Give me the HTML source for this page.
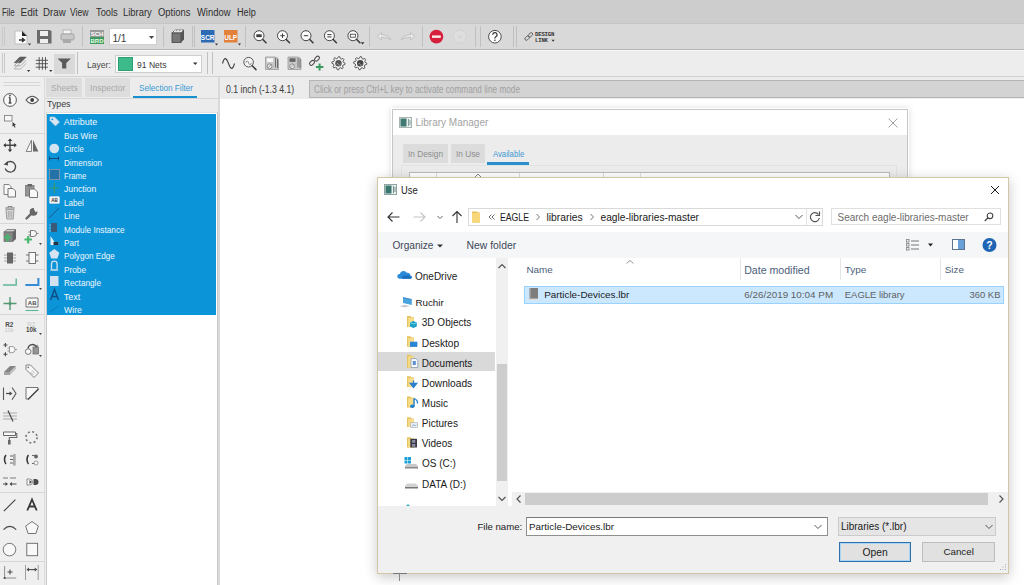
<!DOCTYPE html>
<html><head><meta charset="utf-8">
<style>
*{box-sizing:border-box;margin:0;padding:0}
html,body{width:1024px;height:585px;overflow:hidden;background:#fff;font-family:"Liberation Sans",sans-serif;color:#222}
.a{position:absolute}
.t{position:absolute;white-space:nowrap;line-height:1}
svg{position:absolute;overflow:visible}
</style></head><body>
<!-- MENU BAR -->
<div class="a" id="menubar" style="left:0;top:0;width:1024px;height:23px;background:#cdcdcd"></div>
<div class="t" style="left:1.9px;top:7.6px;font-size:10px;color:#2e2e2e;transform:scaleX(0.79);transform-origin:0 0">File</div>
<div class="t" style="left:20.5px;top:7.6px;font-size:10px;color:#2e2e2e;transform:scaleX(1.0);transform-origin:0 0">Edit</div>
<div class="t" style="left:42.7px;top:7.6px;font-size:10px;color:#2e2e2e;transform:scaleX(0.97);transform-origin:0 0">Draw</div>
<div class="t" style="left:70.4px;top:7.6px;font-size:10px;color:#2e2e2e;transform:scaleX(0.86);transform-origin:0 0">View</div>
<div class="t" style="left:95.5px;top:7.6px;font-size:10px;color:#2e2e2e;transform:scaleX(0.93);transform-origin:0 0">Tools</div>
<div class="t" style="left:123.4px;top:7.6px;font-size:10px;color:#2e2e2e;transform:scaleX(0.94);transform-origin:0 0">Library</div>
<div class="t" style="left:158px;top:7.6px;font-size:10px;color:#2e2e2e;transform:scaleX(0.94);transform-origin:0 0">Options</div>
<div class="t" style="left:196.6px;top:7.6px;font-size:10px;color:#2e2e2e;transform:scaleX(0.94);transform-origin:0 0">Window</div>
<div class="t" style="left:236.9px;top:7.6px;font-size:10px;color:#2e2e2e;transform:scaleX(0.91);transform-origin:0 0">Help</div>
<!-- TOOLBAR 1 -->
<div class="a" style="left:0;top:23px;width:1024px;height:27px;background:#d9d9d9;border-top:1px solid #c6c6c6;border-bottom:1px solid #b5b5b5"></div>
<!-- TOOLBAR 2 -->
<div class="a" style="left:0;top:50px;width:1024px;height:27px;background:#ededed;border-top:1px solid #f8f8f8;border-bottom:1px solid #d2d2d2"></div>
<div class="a" style="left:54px;top:54px;width:21px;height:20px;background:#d9d9d9"></div>
<div class="a" style="left:109px;top:28px;width:48px;height:17px;background:#fff;border:1px solid #cfcfcf"></div>
<div class="t" style="left:112.4px;top:33.6px;font-size:10px;color:#3a3a3a">1/1</div>
<div class="a" style="left:115px;top:55px;width:87px;height:18px;background:#fff;border:1px solid #cdcdcd"></div>
<div class="a" style="left:118px;top:57px;width:15px;height:14px;background:#3dba89;border:1px solid #2f9e70"></div>
<div class="t" style="left:136.7px;top:60px;font-size:9.5px;color:#3a3a3a;transform:scaleX(0.9);transform-origin:0 0">91 Nets</div>
<div class="t" style="left:86.5px;top:60px;font-size:9.5px;color:#4a4a4a;transform:scaleX(0.9);transform-origin:0 0">Layer:</div>
<svg width="1024" height="77" style="left:0;top:0" viewBox="0 0 1024 77">
 <g fill="none" stroke="#c0c0c0" stroke-width="1">
  <!-- handles -->
  <path d="M2.5 27v19M4.5 27v19M2.5 53v20M4.5 53v20" stroke="#c9c9c9"/>
  <!-- tb1 separators -->
  <path d="M82.5 26v21M163.5 26v21M192.5 26v21M194.5 26v21M245.5 26v21M369.5 26v21M422.5 26v21M475.5 26v21M480.5 26v21M513.5 26v21M516.5 26v21"/>
  <!-- tb2 separators -->
  <path d="M77.5 52v22M207.5 52v22M212.5 52v22"/>
 </g>
 <!-- new doc -->
 <path d="M15 31h8l4 4v9h-12z" fill="#fafafa" stroke="#b5b5b5" stroke-width="0.8"/>
 <path d="M22 31l5 5h-5z" fill="#222"/>
 <path d="M19 40h5M22 38l2.5 2-2.5 2" stroke="#333" stroke-width="1.4" fill="none"/>
 <path d="M28 43.5h3l-1.5 2z" fill="#333"/>
 <!-- save -->
 <path d="M37 30h13l1.5 1.5v12h-14.5z" fill="#6a6a6a"/>
 <rect x="40" y="31" width="8" height="5" fill="#eee"/>
 <rect x="40" y="39" width="8" height="4" fill="#eee"/>
 <!-- print -->
 <rect x="63" y="30" width="8" height="4" fill="#f4f4f4" stroke="#aaa" stroke-width="0.8"/>
 <rect x="61" y="34" width="13" height="6" rx="1" fill="#c8c8c8" stroke="#999" stroke-width="0.8"/>
 <rect x="63" y="39" width="8" height="4" fill="#aaa"/>
 <!-- SCH/BRD -->
 <rect x="90" y="30" width="14" height="7" fill="#9a9a9a"/>
 <rect x="90" y="37" width="14" height="7" fill="#3c9a5c"/>
 <text x="97" y="36" font-size="6" fill="#fff" text-anchor="middle" font-family="Liberation Sans" font-weight="bold">SCH</text>
 <text x="97" y="43" font-size="6" fill="#e8ffe8" text-anchor="middle" font-family="Liberation Sans" font-weight="bold">BRD</text>
 <!-- combo arrow -->
 <path d="M149 36h5l-2.5 3z" fill="#444"/>
 <!-- 3D box -->
 <path d="M172 33l3-3h9l-3 3z" fill="#ddd" stroke="#555" stroke-width="0.8"/>
 <rect x="172" y="33" width="9" height="9.5" fill="#777" stroke="#444" stroke-width="0.8"/>
 <path d="M181 33l3-3v9.5l-3 3z" fill="#555"/>
 <path d="M174 31.5l2 -1.5M177 31.5l2-1.5M180 31.5l2-1.5" stroke="#fff" stroke-width="0.8"/>
 <!-- SCR / ULP -->
 <rect x="201" y="30" width="13.5" height="12.5" fill="#2d6ab4"/>
 <text x="207.7" y="39.5" font-size="6.5" fill="#fff" text-anchor="middle" font-family="Liberation Sans" font-weight="bold">SCR</text>
 <path d="M215 43.5h3l-1.5 2z" fill="#333"/>
 <rect x="224" y="30" width="13.5" height="12.5" fill="#e2813c"/>
 <text x="230.7" y="39.5" font-size="6.5" fill="#fff" text-anchor="middle" font-family="Liberation Sans" font-weight="bold">ULP</text>
 <path d="M238 43.5h3l-1.5 2z" fill="#333"/>
 <!-- zooms -->
 <g fill="#fbfbfb" stroke="#3c3c3c" stroke-width="0.95">
  <circle cx="259" cy="35.7" r="5"/><circle cx="282.5" cy="35.7" r="5"/><circle cx="306" cy="35.7" r="5"/><circle cx="329.4" cy="35.7" r="5"/><circle cx="352.9" cy="35.7" r="5"/>
 </g>
 <g stroke="#3c3c3c" stroke-width="1.6" fill="none" stroke-linecap="round">
  <path d="M262.8 39.5l3.2 3.2M286.3 39.5l3.2 3.2M309.8 39.5l3.2 3.2M333.2 39.5l3.2 3.2M356.7 39.5l3.2 3.2"/>
 </g>
 <g stroke="#3c3c3c" stroke-width="1" fill="none">
  <path d="M280.3 35.7h4.4M282.5 33.5v4.4M303.8 35.7h4.4M327.3 34.6h4.2M327.3 36.9h4.2"/>
 </g>
 <rect x="256.3" y="34.3" width="5.4" height="2.8" fill="#3c3c3c"/>
 <rect x="350.3" y="34.2" width="5.2" height="3" fill="none" stroke="#3c3c3c" stroke-width="0.8"/>
 <path d="M360.8 42.3h3.6l-1.8 2.3z" fill="#333"/>
 <!-- undo redo (disabled) -->
 <path d="M377 36.5l4.5-4v2.3c4 0 7.5 1.2 9.5 4.9c-2.5-1.8-5.5-2.2-9.5-2.2v2.5z" fill="#e6e6e6" stroke="#bdbdbd" stroke-width="0.9" stroke-linejoin="round"/>
 <path d="M415 36.5l-4.5-4v2.3c-4 0-7.5 1.2-9.5 4.9c2.5-1.8 5.5-2.2 9.5-2.2v2.5z" fill="#e6e6e6" stroke="#bdbdbd" stroke-width="0.9" stroke-linejoin="round"/>
 <!-- stop -->
 <circle cx="436.4" cy="36.6" r="6.9" fill="#d61f3c"/>
 <rect x="432" y="35.4" width="8.8" height="2.5" fill="#fbe9ec"/>
 <circle cx="459.8" cy="36.6" r="6.4" fill="#dedede" stroke="#d0d0d0" stroke-width="0.8"/>
 <path d="M457.8 34.6l4 4M461.8 34.6l-4 4" stroke="#cfcfcf" stroke-width="0.9"/>
 <!-- help -->
 <circle cx="494.9" cy="36.7" r="6.3" fill="#fdfdfd" stroke="#3a3a3a" stroke-width="0.9"/>
 <path d="M492.7 34.8a2.2 2.2 0 1 1 3.2 2c-.8.4-1 .9-1 1.6" fill="none" stroke="#333" stroke-width="1.2"/>
 <circle cx="494.9" cy="40.3" r="0.8" fill="#333"/>
 <!-- design link -->
 <g fill="none" stroke="#555" stroke-width="0.9">
  <rect x="524.6" y="36.6" width="5" height="3" rx="1.5" transform="rotate(-45 527.1 38.1)"/>
  <rect x="528" y="33.4" width="5" height="3" rx="1.5" transform="rotate(-45 530.5 34.9)"/>
 </g>
 <text x="535" y="36.3" font-size="5.6" fill="#333" font-family="Liberation Mono" font-weight="bold" letter-spacing="-0.15">DESIGN</text>
 <text x="535" y="41.5" font-size="5.6" fill="#333" font-family="Liberation Mono" font-weight="bold" letter-spacing="-0.15">LINK</text>
 <path d="M551.5 39.8h3.2l-1.6 2z" fill="#333"/>

 <!-- TB2: layers -->
 <path d="M14.2 62.7l5.6-5.6h6.4l-5.6 5.6z" fill="#5e5e5e" stroke="#555" stroke-width="0.6"/>
 <path d="M14.2 65.8l5.6-5.6M14.2 65.8h6.4l5.6-5.6" fill="none" stroke="#9a9a9a" stroke-width="0.8"/>
 <path d="M14.2 69l5.6-5.6M14.2 69h6.4l5.6-5.6" fill="none" stroke="#a5a5a5" stroke-width="0.8"/>
 <path d="M27 70h3.2l-1.6 2z" fill="#333"/>
 <!-- grid -->
 <path d="M35.8 60.3h12.2M35.8 63.7h12.2M35.8 67.2h12.2M39.2 57.1v12.7M42.4 57.1v12.7M45.5 57.1v12.7" stroke="#4a4a4a" stroke-width="0.9"/>
 <path d="M49.2 70h3.2l-1.6 2z" fill="#333"/>
 <!-- funnel -->
 <path d="M57.5 58.5h13.4l-4.6 4.4v5.5h-4.2v-5.5z" fill="#5a5a5a"/>
 <!-- tb2 icons right -->
 <path d="M222.5 63.5c1.8-6.5 3.6-6.5 6 0s4.2 6.5 6 0" stroke="#3a3a3a" stroke-width="1.05" fill="none"/>
 <circle cx="248.6" cy="62.2" r="4.8" fill="#f6f6f6" stroke="#444" stroke-width="0.9"/>
 <path d="M245.8 62.8c.9-2.6 1.8-2.6 2.8 0s1.9 2.6 2.8 0" stroke="#555" stroke-width="0.7" fill="none"/>
 <path d="M252.2 65.8l3.8 3.8" stroke="#3a3a3a" stroke-width="1.5" stroke-linecap="round"/>
 <path d="M265.5 57h9.5q3.5 0 3.5 3.5v9h-13z" fill="#c9c9c9" stroke="#9a9a9a" stroke-width="0.8"/>
 <rect x="267" y="58.3" width="6" height="3.6" fill="#fafafa"/>
 <circle cx="269.6" cy="66.3" r="2.4" fill="#eee" stroke="#777" stroke-width="0.8"/><path d="M268 67.8l3.2-3.2" stroke="#777" stroke-width="0.7"/>
 <path d="M275.5 58v9.5M277.5 59v9" stroke="#555" stroke-width="0.8"/>
 <path d="M288 57h9.5q3.5 0 3.5 3.5v9h-13z" fill="#c9c9c9" stroke="#9a9a9a" stroke-width="0.8"/>
 <rect x="289.5" y="58.3" width="6" height="3.6" fill="#666"/>
 <circle cx="292.1" cy="66.3" r="2.4" fill="#eee" stroke="#777" stroke-width="0.8"/><path d="M290.5 67.8l3.2-3.2" stroke="#777" stroke-width="0.7"/>
 <path d="M298 58v9.5M300 59v9" stroke="#555" stroke-width="0.8"/>
 <g fill="none" stroke="#4a4a4a" stroke-width="1.05">
  <rect x="309.2" y="61.2" width="5.6" height="3.4" rx="1.7" transform="rotate(-45 312 62.9)"/>
  <rect x="314.2" y="57" width="5.6" height="3.4" rx="1.7" transform="rotate(-45 317 58.7)"/>
 </g>
 <path d="M315.9 67h7.5M319.6 63.5v7" stroke="#3a9a60" stroke-width="2"/>
 <path d="M338.50 56.60 L339.79 56.73 L340.38 58.67 L341.22 59.13 L343.17 58.53 L343.99 59.53 L343.03 61.32 L343.31 62.24 L345.10 63.20 L344.97 64.49 L343.03 65.08 L342.57 65.92 L343.17 67.87 L342.17 68.69 L340.38 67.73 L339.46 68.01 L338.50 69.80 L337.21 69.67 L336.62 67.73 L335.78 67.27 L333.83 67.87 L333.01 66.87 L333.97 65.08 L333.69 64.16 L331.90 63.20 L332.03 61.91 L333.97 61.32 L334.43 60.48 L333.83 58.53 L334.83 57.71 L336.62 58.67 L337.54 58.39z" fill="#f2f2f2" stroke="#4a4a4a" stroke-width="0.9"/><circle cx="338.5" cy="63.2" r="3.2" fill="#555"/><path d="M336.7 64.4q1-2.4 1.8 0t1.8 0" fill="none" stroke="#bbb" stroke-width="0.7"/>
 <path d="M360.20 56.60 L361.49 56.73 L362.08 58.67 L362.92 59.13 L364.87 58.53 L365.69 59.53 L364.73 61.32 L365.01 62.24 L366.80 63.20 L366.67 64.49 L364.73 65.08 L364.27 65.92 L364.87 67.87 L363.87 68.69 L362.08 67.73 L361.16 68.01 L360.20 69.80 L358.91 69.67 L358.32 67.73 L357.48 67.27 L355.53 67.87 L354.71 66.87 L355.67 65.08 L355.39 64.16 L353.60 63.20 L353.73 61.91 L355.67 61.32 L356.13 60.48 L355.53 58.53 L356.53 57.71 L358.32 58.67 L359.24 58.39z" fill="#f2f2f2" stroke="#4a4a4a" stroke-width="0.9"/><circle cx="360.2" cy="63.2" r="3.2" fill="#444"/><path d="M358.4 64.4q1-2.4 1.8 0t1.8 0" fill="none" stroke="#bbb" stroke-width="0.7"/>
 <path d="M203 64h-0" />
 <path d="M193 62.5h4.5l-2.25 2.6z" fill="#333"/>
</svg>
<!-- LEFT TOOL PANEL -->
<div class="a" style="left:0;top:77px;width:44px;height:508px;background:#efefef"></div>
<svg width="44" height="508" style="left:0;top:77px;opacity:.88" viewBox="0 77 44 508">
 <g stroke="#d3d3d3" stroke-width="1" fill="none">
  <path d="M3.5 82.5h37M3.5 85.5h37"/>
  <path d="M0 133.5h44M0 178.5h44M0 223.5h44M0 269.5h44M0 314.5h44M0 492.5h44M0 561.5h44"/>
 </g>
 <!-- info -->
 <circle cx="10" cy="100" r="6.4" fill="#fafafa" stroke="#444" stroke-width="1"/>
 <path d="M10 97.5v5.5M8.6 103h2.8M8.8 97.5h1.2" stroke="#333" stroke-width="1.5" fill="none"/>
 <circle cx="10" cy="95.6" r="0.9" fill="#333"/>
 <!-- eye -->
 <path d="M26 100c4-5 8.5-5 12.5 0c-4 5-8.5 5-12.5 0z" fill="#fafafa" stroke="#444" stroke-width="1.1"/>
 <circle cx="32.2" cy="100" r="1.9" fill="#222"/>
 <!-- select -->
 <rect x="4.5" y="115.5" width="7.5" height="5.5" fill="#fafafa" stroke="#777" stroke-width="0.9"/>
 <path d="M12.5 122l3.6 3-1.6.3 1 2-.8.4-1-2-1.2 1z" fill="#222"/>
 <!-- move -->
 <path d="M4 145.2h12M10 139.2v12" stroke="#333" stroke-width="1.4"/>
 <path d="M10 138.5l-2.3 2.5h4.6zM10 152l-2.3-2.5h4.6zM3.3 145.2l2.5-2.3v4.6zM16.7 145.2l-2.5-2.3v4.6z" fill="#222"/>
 <!-- mirror -->
 <path d="M31.5 140v11.5h-5.3z" fill="#fafafa" stroke="#666" stroke-width="0.9"/>
 <path d="M33 140v11.5h5.3z" fill="#555"/>
 <!-- rotate -->
 <path d="M6.5 163a5.3 5.3 0 1 1-1.3 5.5" fill="none" stroke="#333" stroke-width="1.3"/>
 <path d="M3.5 164.5l4.3-3.3.2 4.4z" fill="#333"/>
 <!-- copy -->
 <path d="M4 184.5h5l2 2v8h-7z" fill="#fafafa" stroke="#666" stroke-width="0.9"/>
 <path d="M8 188.5h5l2.5 2.5v6h-7.5z" fill="#fafafa" stroke="#555" stroke-width="0.9"/>
 <!-- paste -->
 <rect x="25.5" y="185.5" width="8.5" height="10.5" fill="#888" stroke="#666" stroke-width="0.8"/>
 <rect x="27.5" y="184" width="4.5" height="2.5" fill="#555"/>
 <path d="M29.5 189h5l3 3v5.5h-8z" fill="#fafafa" stroke="#555" stroke-width="0.9"/>
 <!-- delete -->
 <path d="M5 208h10M8 208v-1.5h4v1.5" stroke="#777" stroke-width="1" fill="none"/>
 <path d="M6 209.5h8l-.8 9.5h-6.4z" fill="#d8d8d8" stroke="#888" stroke-width="0.9"/>
 <path d="M8.3 211v6.5M10 211v6.5M11.7 211v6.5" stroke="#888" stroke-width="0.7"/>
 <!-- wrench -->
 <path d="M26.5 218.5l7.3-7.3" stroke="#555" stroke-width="2.4" stroke-linecap="round"/>
 <path d="M33 208.5a3.3 3.3 0 1 0 3.8 3.8l-2 .3-1.6-1.6.3-2z" fill="#555" stroke="#555" stroke-width="1.2"/>
 <!-- add -->
 <path d="M4 232l3-2.5h9l-3 2.5z" fill="#ccc" stroke="#555" stroke-width="0.7"/>
 <rect x="4" y="232" width="9" height="9.5" fill="#777" stroke="#555" stroke-width="0.7"/>
 <path d="M13 232l3-2.5v9.5l-3 2.5z" fill="#555"/>
 <path d="M4 237.5h7M7.5 234v7.5" stroke="#2fb05c" stroke-width="2.2"/>
 <!-- gate add -->
 <path d="M30.5 230.5h3a3 3 0 0 1 0 6h-3z" fill="#fafafa" stroke="#555" stroke-width="0.9"/>
 <path d="M28.5 232h2M28.5 235h2M36.5 233.5h2" stroke="#555" stroke-width="0.8"/>
 <path d="M24.5 239.5h7.5M28.2 236v7.5" stroke="#2fb05c" stroke-width="2.2"/>
 <path d="M39 243h3l-1.5 2z" fill="#333"/>
 <!-- ic -->
 <rect x="7" y="252.5" width="6" height="11" fill="#555"/>
 <path d="M4 255h3M4 258h3M4 261h3M13 255h3M13 258h3M13 261h3" stroke="#888" stroke-width="0.8"/>
 <rect x="29" y="252.5" width="6.5" height="11" fill="#fafafa" stroke="#555" stroke-width="0.9"/>
 <path d="M26 255h3M26 261h3M35.5 255h3M35.5 261h3" stroke="#555" stroke-width="0.9"/>
 <!-- wires -->
 <path d="M3 285h13.2v-6.5" fill="none" stroke="#4bb08a" stroke-width="1.4"/>
 <path d="M25.4 285h13v-7" fill="none" stroke="#1b7fd6" stroke-width="2"/>
 <path d="M39 288h3l-1.5 2z" fill="#333"/>
 <!-- junction -->
 <path d="M3.5 303.5h13M10 297v13" stroke="#3e8e62" stroke-width="1.4"/>
 <circle cx="10" cy="303.5" r="1.6" fill="#3e8e62"/>
 <!-- label -->
 <path d="M27.5 298h10.5v9h-12v-7.5z" fill="#fafafa" stroke="#555" stroke-width="0.9"/>
 <text x="32.2" y="305.3" font-size="6" text-anchor="middle" font-family="Liberation Sans" font-weight="bold" fill="#333">AB</text>
 <path d="M25.5 310.5h13" stroke="#4bb08a" stroke-width="1.1"/>
 <!-- R2 10k -->
 <text x="9.2" y="326.5" font-size="6.3" text-anchor="middle" font-family="Liberation Sans" font-weight="bold" fill="#333">R2</text>
 <text x="9.2" y="332.3" font-size="5.8" text-anchor="middle" font-family="Liberation Sans" fill="#c4c4c4">10k</text>
 <text x="31.2" y="326.5" font-size="6.3" text-anchor="middle" font-family="Liberation Sans" fill="#c4c4c4">R2</text>
 <text x="31.2" y="332.3" font-size="6.3" text-anchor="middle" font-family="Liberation Sans" font-weight="bold" fill="#333">10k</text>
 <path d="M39 333h3l-1.5 2z" fill="#333"/>
 <!-- split gate -->
 <path d="M5.4 343v4M3.4 345h4M5.4 352.2v4M3.4 354.2h4" stroke="#333" stroke-width="1.1"/>
 <path d="M9.5 346.5h2.5a3.1 3.1 0 0 1 0 6.2h-2.5z" fill="#fafafa" stroke="#777" stroke-width="0.8"/>
 <path d="M7.5 348h2M7.5 351h2M15 349.5h2" stroke="#777" stroke-width="0.8"/>
 <!-- replace -->
 <path d="M28 348.5a4.5 4.5 0 0 1 8.5-1.5" fill="none" stroke="#333" stroke-width="1.3"/>
 <path d="M37.5 344.5v4h-4z" fill="#333"/>
 <circle cx="28.2" cy="351.6" r="2.8" fill="#fafafa" stroke="#555" stroke-width="0.9"/>
 <rect x="33" y="347" width="5.5" height="7" fill="#888" stroke="#555" stroke-width="0.7"/>
 <path d="M39 355h3l-1.5 2z" fill="#333"/>
 <!-- eraser -->
 <path d="M4 372l6-6h6l-6 6z" fill="#777"/>
 <path d="M4 372h6v3h-6z" fill="#999"/>
 <path d="M10 372l6-6v3l-6 6z" fill="#bbb"/>
 <!-- tag -->
 <path d="M26 369.5v-4.5h4.5l8 8-4.5 4.5z" fill="#fafafa" stroke="#666" stroke-width="0.9"/>
 <circle cx="28.3" cy="367.3" r="0.9" fill="#666"/>
 <path d="M30.5 372l3 3M32 370.5l3 3" stroke="#888" stroke-width="0.7"/>
 <!-- bus entry -->
 <path d="M3.5 387.5v12.5" stroke="#444" stroke-width="1.1"/>
 <path d="M6 393.5h5" stroke="#333" stroke-width="1.2"/>
 <path d="M9.5 391.5l3 2-3 2z" fill="#333"/>
 <path d="M12 387.5l4 6-4 6.2" fill="none" stroke="#444" stroke-width="1.1"/>
 <!-- miter -->
 <path d="M26 387.5h12v1.5l-10 10h-2z" fill="#fafafa" stroke="#555" stroke-width="0.9"/>
 <path d="M38.5 389l-10.5 10.5" stroke="#333" stroke-width="1.4"/>
 <!-- hatch -->
 <path d="M3 413h14M3 416h14M3 419h14" stroke="#999" stroke-width="0.9"/>
 <path d="M8 410.5l5 11" stroke="#333" stroke-width="1.2"/>
 <!-- paint roller -->
 <path d="M3.5 432h12v3.5h-12z" fill="#fafafa" stroke="#555" stroke-width="1"/>
 <path d="M15.5 433.5h1.3v4h-7.5v3" fill="none" stroke="#555" stroke-width="1.1"/>
 <rect x="8" y="440" width="2.6" height="4.5" fill="#555"/>
 <!-- dotted circle -->
 <circle cx="31.5" cy="437.3" r="5.6" fill="none" stroke="#666" stroke-width="1.6" stroke-dasharray="2 2.4"/>
 <!-- swap pins -->
 <path d="M6 455a3.5 5.5 0 0 0 0 9" fill="none" stroke="#222" stroke-width="1.6"/>
 <path d="M10 456h3M10 459.5h3M10 463h3M14 454v11.5" stroke="#555" stroke-width="1"/>
 <path d="M15.5 454v11.5" stroke="#aaa" stroke-width="0.8"/>
 <path d="M28.5 455a3.5 5.5 0 0 0 0 9" fill="none" stroke="#222" stroke-width="1.6"/>
 <path d="M32 455.5h4.5M32 463.5h4.5" stroke="#555" stroke-width="1"/>
 <circle cx="36" cy="456.5" r="2" fill="#555"/>
 <circle cx="36" cy="463" r="2" fill="#fafafa" stroke="#777" stroke-width="0.8"/>
 <!-- optimize -->
 <path d="M3 478h5M10 478h6" stroke="#999" stroke-width="1.3"/>
 <path d="M3 484h4M10.5 484h6" stroke="#333" stroke-width="1.1"/>
 <path d="M8 484l-2.5-2v4zM9.5 484l2.5-2v4z" fill="#333"/>
 <!-- gate swap -->
 <path d="M27 479h2.5a3 3 0 0 1 0 6h-2.5z" fill="#fafafa" stroke="#666" stroke-width="0.8"/>
 <path d="M33.5 479h2a3 3 0 0 1 0 6h-2z" fill="#333"/>
 <path d="M32 482l-2.5-2v4z" fill="#333"/>
 <!-- line -->
 <path d="M3.8 511.2L15.4 499.6" stroke="#333" stroke-width="1.2"/>
 <!-- A -->
 <path d="M27.3 510.5l4.7-11 4.7 11M29 506.5h6" fill="none" stroke="#222" stroke-width="1.8"/>
 <!-- arc -->
 <path d="M3.5 529.6q6.3-6.5 12.7 0" fill="none" stroke="#333" stroke-width="1.1"/>
 <!-- pentagon -->
 <path d="M32 521.5l6.3 4.6-2.4 7.4h-7.8l-2.4-7.4z" fill="#fafafa" stroke="#555" stroke-width="0.9"/>
 <!-- circle -->
 <circle cx="9.5" cy="549.6" r="6.3" fill="#fafafa" stroke="#555" stroke-width="0.9"/>
 <!-- rect -->
 <rect x="26.8" y="543.3" width="10.8" height="12.4" fill="#fafafa" stroke="#555" stroke-width="0.9"/>
 <!-- mark -->
 <path d="M4.6 566v12h11.6" fill="none" stroke="#777" stroke-width="0.9"/>
 <circle cx="4.6" cy="578" r="1.1" fill="#333"/>
 <path d="M7.5 572h5M10 569.5v5" stroke="#333" stroke-width="1.1"/>
 <!-- dimension -->
 <path d="M25.5 565v15M38.2 565v15" stroke="#888" stroke-width="0.9"/>
 <path d="M27 569.6h9.7" stroke="#333" stroke-width="1.1"/>
 <path d="M26.5 569.6l2.5-2v4zM37.2 569.6l-2.5-2v4z" fill="#333"/>
</svg>
<!-- SIDE PANEL -->
<div class="a" style="left:44px;top:77px;width:176px;height:508px;background:#ececec;border-left:1px solid #dcdcdc"></div>
<div class="a" style="left:46px;top:78px;width:36px;height:19px;background:#dddddd"></div>
<div class="a" style="left:85px;top:78px;width:45px;height:19px;background:#dddddd"></div>
<div class="a" style="left:45px;top:98px;width:173px;height:1px;background:#d6d6d6"></div>
<div class="a" style="left:133px;top:96px;width:64px;height:2px;background:#1a8fd0"></div>
<div class="t" style="left:51px;top:83.5px;font-size:8.6px;color:#a9a9a9">Sheets</div>
<div class="t" style="left:90px;top:83.5px;font-size:8.6px;color:#a9a9a9">Inspector</div>
<div class="t" style="left:139.3px;top:83.5px;font-size:8.6px;color:#3a9ad6;transform:scaleX(0.95);transform-origin:0 0">Selection Filter</div>
<div class="t" style="left:47px;top:100px;font-size:8.8px;color:#3a3a3a">Types</div>
<div class="a" style="left:46px;top:112px;width:172px;height:473px;background:#fff;border-left:1px solid #c9c9c9;border-right:1px solid #c9c9c9;border-top:1px solid #e0e0e0"></div>
<div class="a" style="left:47px;top:114px;width:169px;height:200.5px;background:#0c94d8"></div>
<div class="a" style="left:218px;top:77px;width:2px;height:508px;background:#d9d9d9"></div>
<svg width="20" height="210" style="left:44px;top:110px" viewBox="44 110 20 210">
 <!-- attribute tag -->
 <path d="M50 117h4.5l5 5-4 4-5.5-5.5z" fill="#d8e6f2" stroke="#b9cde0" stroke-width="0.6"/>
 <circle cx="52.3" cy="119.3" r="0.9" fill="#0c94d8"/>
 <!-- circle -->
 <circle cx="54.3" cy="148.5" r="4.8" fill="#d4e3f0"/>
 <!-- dimension -->
 <path d="M49 158.5h10M49.5 156.5v4M58.5 156.5v4" stroke="#124a78" stroke-width="1"/>
 <!-- frame -->
 <rect x="49.5" y="169.5" width="10" height="10" fill="#2272a8" stroke="#7a93a8" stroke-width="1"/>
 <!-- junction -->
 <path d="M54.3 183v10M49.5 188h9.5" stroke="#3a9a6a" stroke-width="1.2"/>
 <!-- label -->
 <rect x="49.5" y="196.5" width="10" height="7" rx="1" fill="#f2f6fa" stroke="#c9d6e2" stroke-width="0.6"/>
 <text x="54.5" y="202" font-size="4.5" text-anchor="middle" fill="#333" font-family="Liberation Sans" font-weight="bold">AB</text>
 <!-- line -->
 <path d="M49 218l10-10" stroke="#1a5c90" stroke-width="1"/>
 <!-- module instance -->
 <rect x="51" y="223" width="6" height="9" fill="#3a5a78"/>
 <path d="M49 225h2M49 228h2M49 231h2" stroke="#aac4dc" stroke-width="0.8"/>
 <!-- part -->
 <path d="M50.5 236v9h8v-3h-4z" fill="#e8f0f7"/>
 <rect x="53.5" y="242" width="5" height="3" fill="#234"/>
 <!-- polygon -->
 <path d="M54.3 249l5 3.8-1.9 5.7h-6.2l-1.9-5.7z" fill="#d6e4f1"/>
 <!-- probe -->
 <path d="M51.5 269v-5a2.8 2.8 0 0 1 5.6 0v5M50.5 270h7.6" fill="none" stroke="#d2e2f0" stroke-width="1.3"/>
 <!-- rectangle -->
 <rect x="50" y="276" width="8.5" height="10" fill="#d4e2ef"/>
 <!-- text A -->
 <path d="M50.5 300l4-10.5 4 10.5M51.8 296.5h5.4" fill="none" stroke="#134d80" stroke-width="1.4"/>
 <!-- wire -->
 <path d="M49 312l10-6" stroke="#0a7fc0" stroke-width="1"/>
</svg>
<div class="t" style="left:63.8px;top:118.3px;font-size:9px;color:#eef7fd;transform:scaleX(1.0);transform-origin:0 0">Attribute</div>
<div class="t" style="left:63.8px;top:131.7px;font-size:9px;color:#eef7fd;transform:scaleX(0.911);transform-origin:0 0">Bus Wire</div>
<div class="t" style="left:63.8px;top:145.1px;font-size:9px;color:#eef7fd;transform:scaleX(0.855);transform-origin:0 0">Circle</div>
<div class="t" style="left:63.8px;top:158.5px;font-size:9px;color:#eef7fd;transform:scaleX(0.89);transform-origin:0 0">Dimension</div>
<div class="t" style="left:63.8px;top:171.9px;font-size:9px;color:#eef7fd;transform:scaleX(0.86);transform-origin:0 0">Frame</div>
<div class="t" style="left:63.8px;top:185.3px;font-size:9px;color:#eef7fd;transform:scaleX(0.962);transform-origin:0 0">Junction</div>
<div class="t" style="left:63.8px;top:198.7px;font-size:9px;color:#eef7fd;transform:scaleX(0.895);transform-origin:0 0">Label</div>
<div class="t" style="left:63.8px;top:212.1px;font-size:9px;color:#eef7fd;transform:scaleX(0.906);transform-origin:0 0">Line</div>
<div class="t" style="left:63.8px;top:225.5px;font-size:9px;color:#eef7fd;transform:scaleX(0.918);transform-origin:0 0">Module Instance</div>
<div class="t" style="left:63.8px;top:238.9px;font-size:9px;color:#eef7fd;transform:scaleX(0.906);transform-origin:0 0">Part</div>
<div class="t" style="left:63.8px;top:252.3px;font-size:9px;color:#eef7fd;transform:scaleX(0.907);transform-origin:0 0">Polygon Edge</div>
<div class="t" style="left:63.8px;top:265.7px;font-size:9px;color:#eef7fd;transform:scaleX(0.917);transform-origin:0 0">Probe</div>
<div class="t" style="left:63.8px;top:279.1px;font-size:9px;color:#eef7fd;transform:scaleX(0.913);transform-origin:0 0">Rectangle</div>
<div class="t" style="left:63.8px;top:292.5px;font-size:9px;color:#eef7fd;transform:scaleX(1.0);transform-origin:0 0">Text</div>
<div class="t" style="left:63.8px;top:305.9px;font-size:9px;color:#eef7fd;transform:scaleX(0.97);transform-origin:0 0">Wire</div>
<!-- COMMAND ROW -->
<div class="a" style="left:220px;top:77px;width:804px;height:22px;background:#ececec"></div>
<div class="a" style="left:309px;top:80px;width:720px;height:17.5px;background:#d3d3d3;border:1px solid #b5b5b5"></div>
<div class="t" style="left:226.3px;top:84.6px;font-size:10px;color:#3a3a3a;transform:scaleX(0.87);transform-origin:0 0">0.1 inch (-1.3 4.1)</div>
<div class="t" style="left:314px;top:84.6px;font-size:10px;color:#a0a0a0;transform:scaleX(0.826);transform-origin:0 0">Click or press Ctrl+L key to activate command line mode</div>

<!-- LIBRARY MANAGER -->
<div class="a" style="left:391px;top:108px;width:518px;height:72px;box-shadow:0 0 6px rgba(0,0,0,.14)"></div>
<div class="a" style="left:392px;top:109px;width:516px;height:70px;background:#ececec;border:1px solid #c6c6c6;border-bottom:none"></div>
<div class="a" style="left:393px;top:110px;width:514px;height:25px;background:#fff"></div>
<svg width="14" height="12" style="left:399px;top:117px" viewBox="0 0 14 12">
 <rect x="0.5" y="0.5" width="12" height="10" fill="#e9efee" stroke="#a7b5b3"/>
 <rect x="1.5" y="1.5" width="6" height="8" fill="#3e7a72"/>
 <path d="M9.5 2v7M11 3v5" stroke="#6a8d88" stroke-width="0.8"/>
</svg>
<div class="t" style="left:415.5px;top:117.5px;font-size:10px;color:#a3a3a3;transform:scaleX(1.0)">Library Manager</div>
<svg width="14" height="14" style="left:885.5px;top:115.7px" viewBox="0 0 14 14"><path d="M2.5 2.5l9 9M11.5 2.5l-9 9" stroke="#9a9a9a" stroke-width="0.9"/></svg>
<div class="a" style="left:403px;top:144px;width:45px;height:19px;background:#dcdcdc"></div>
<div class="a" style="left:450.5px;top:144px;width:34px;height:19px;background:#dcdcdc"></div>
<div class="t" style="left:408px;top:149.5px;font-size:8.3px;color:#8e8e8e">In Design</div>
<div class="t" style="left:456px;top:149.5px;font-size:8.3px;color:#8e8e8e">In Use</div>
<div class="t" style="left:492.8px;top:149.5px;font-size:8.3px;color:#3d98d2;transform:scaleX(0.93);transform-origin:0 0">Available</div>
<div class="a" style="left:487px;top:162px;width:42px;height:2.5px;background:#2a8fcc"></div>
<div class="a" style="left:401px;top:165px;width:496px;height:14px;border:1px solid #e2e2e2;border-bottom:none;background:#ececec"></div>
<div class="a" style="left:409px;top:172px;width:481px;height:7px;background:#fff;border:1px solid #b9b9b9;border-bottom:none"></div>
<div class="a" style="left:435.5px;top:173px;width:1px;height:6px;background:#dadada"></div>
<div class="a" style="left:518.5px;top:173px;width:1px;height:6px;background:#dadada"></div>
<div class="a" style="left:602.5px;top:173px;width:1px;height:6px;background:#dadada"></div><div class="a" style="left:640px;top:173px;width:1px;height:6px;background:#e2e2e2"></div>
<svg width="10" height="6" style="left:473px;top:172.5px" viewBox="0 0 10 6"><path d="M1 5l4-4 4 4" fill="none" stroke="#777" stroke-width="0.9"/></svg>

<!-- USE DIALOG -->
<div class="a" style="left:377px;top:177px;width:632px;height:397px;box-shadow:0 3px 12px rgba(0,0,0,.22)"></div>
<div class="a" id="use" style="left:377px;top:177px;width:632px;height:397px;background:#f0f0f0;border:1px solid #d3c6a5"></div>
<div class="a" style="left:378px;top:178px;width:630px;height:54px;background:#fff"></div>
<div class="a" style="left:378px;top:232px;width:630px;height:26px;background:#f5f6f7"></div>
<div class="a" style="left:378px;top:258px;width:630px;height:248px;background:#fff"></div>
<!-- title -->
<svg width="14" height="12" style="left:384px;top:184px" viewBox="0 0 14 12">
 <rect x="0.5" y="0.5" width="12" height="10" fill="#e9efee" stroke="#8fa3a0"/>
 <rect x="1.5" y="1.5" width="6" height="8" fill="#3b776e"/>
 <path d="M9.5 2v7M11 3v5" stroke="#557a74" stroke-width="0.8"/>
</svg>
<div class="t" style="left:401.4px;top:185.2px;font-size:11px;color:#1a1a1a;transform:scaleX(0.85);transform-origin:0 0">Use</div>
<svg width="14" height="14" style="left:987.5px;top:183px" viewBox="0 0 14 14"><path d="M3 3l8 8M11 3l-8 8" stroke="#1a1a1a" stroke-width="1"/></svg>
<!-- nav arrows -->
<svg width="80" height="20" style="left:383px;top:207px" viewBox="383 207 80 20">
 <path d="M388 217h11.5M392.5 212.5l-4.5 4.5 4.5 4.5" fill="none" stroke="#333" stroke-width="1.1"/>
 <path d="M413.5 217h11.5M420.5 212.5l4.5 4.5-4.5 4.5" fill="none" stroke="#c4c4c4" stroke-width="1.1"/>
 <path d="M437.5 216l2.5 2.5 2.5-2.5" fill="none" stroke="#666" stroke-width="1"/>
 <path d="M457 223v-11.5M452.5 216l4.5-4.5 4.5 4.5" fill="none" stroke="#333" stroke-width="1.1"/>
</svg>
<!-- address -->
<div class="a" style="left:468px;top:208px;width:355px;height:18px;background:#fff;border:1px solid #d9d9d9"></div>
<div class="a" style="left:806px;top:209px;width:1px;height:16px;background:#e3e3e3"></div>
<svg width="14" height="14" style="left:470px;top:210px" viewBox="0 0 14 14">
 <path d="M2 1.5h5l1 1h2v10h-8z" fill="#e8c25a"/>
 <path d="M2 3h8v9.5h-8z" fill="#f7d77a"/>
</svg>
<svg width="8" height="8" style="left:487.5px;top:213px" viewBox="0 0 8 8"><path d="M3.5 1.5l-2.5 2.5 2.5 2.5M6.5 1.5l-2.5 2.5 2.5 2.5" fill="none" stroke="#6a6a6a" stroke-width="1"/></svg>
<div class="t" style="left:500px;top:213.0px;font-size:10px;color:#1a1a1a;transform:scaleX(0.87);transform-origin:left">EAGLE</div>
<svg width="8" height="10" style="left:534px;top:212px" viewBox="0 0 8 10"><path d="M2.5 2l3 3-3 3" fill="none" stroke="#777" stroke-width="1"/></svg>
<div class="t" style="left:546.5px;top:213.0px;font-size:10.3px;color:#1a1a1a">libraries</div>
<svg width="8" height="10" style="left:587.5px;top:212px" viewBox="0 0 8 10"><path d="M2.5 2l3 3-3 3" fill="none" stroke="#777" stroke-width="1"/></svg>
<div class="t" style="left:600.5px;top:213.0px;font-size:10.2px;color:#1a1a1a">eagle-libraries-master</div>
<svg width="10" height="8" style="left:793.5px;top:213px" viewBox="0 0 10 8"><path d="M1.5 2l3.5 3.5 3.5-3.5" fill="none" stroke="#555" stroke-width="1"/></svg>
<svg width="14" height="14" style="left:808px;top:210px" viewBox="0 0 14 14"><path d="M10.5 4.5a4.5 4.5 0 1 0 .8 3.5" fill="none" stroke="#555" stroke-width="1.2"/><path d="M11.5 1.5v4h-4" fill="none" stroke="#555" stroke-width="1.2"/></svg>
<!-- search -->
<div class="a" style="left:831px;top:207.5px;width:170px;height:17.5px;background:#fff;border:1px solid #e0e0e0"></div>
<div class="t" style="left:837.5px;top:212.8px;font-size:10px;color:#6d6d6d">Search eagle-libraries-master</div>
<svg width="12" height="12" style="left:983px;top:211px" viewBox="0 0 12 12"><circle cx="7" cy="4.8" r="2.8" fill="none" stroke="#444" stroke-width="1.1"/><path d="M5 6.8l-3.3 3.3" stroke="#444" stroke-width="1.3"/></svg>
<!-- command bar -->
<div class="t" style="left:392.5px;top:240.5px;font-size:10.1px;color:#3c4857">Organize</div>
<svg width="8" height="6" style="left:435.5px;top:242.5px" viewBox="0 0 8 6"><path d="M1 1.5h6l-3 3z" fill="#333"/></svg>
<div class="t" style="left:466.5px;top:240.5px;font-size:10.4px;color:#3c4857">New folder</div>
<svg width="100" height="20" style="left:900px;top:235px" viewBox="900 235 100 20">
 <g fill="none" stroke="#8a8a8a" stroke-width="0.9">
  <rect x="906.5" y="239.5" width="2.5" height="2.5"/><rect x="906.5" y="243.5" width="2.5" height="2.5"/><rect x="906.5" y="247.5" width="2.5" height="2.5"/>
 </g>
 <path d="M911 241h8M911 245h8M911 249h8" stroke="#666" stroke-width="0.9"/>
 <path d="M928 243.5h5l-2.5 3z" fill="#222"/>
 <rect x="952.5" y="239.5" width="12" height="10" fill="#fff" stroke="#5d7590" stroke-width="1"/>
 <rect x="958" y="240" width="6" height="9" fill="#6aa0d8"/>
 <circle cx="989.5" cy="245" r="7" fill="#1f65b3"/>
 <text x="989.5" y="249" font-size="10.5" font-weight="bold" text-anchor="middle" fill="#fff" font-family="Liberation Sans">?</text>
</svg>
<!-- nav pane -->
<div class="a" style="left:378px;top:352px;width:117px;height:18.5px;background:#d9d9d9"></div>
<div class="a" style="left:495.5px;top:258px;width:12.5px;height:248px;background:#f0f0f0"></div>
<div class="a" style="left:496.5px;top:364px;width:10.5px;height:117px;background:#cdcdcd"></div>
<svg width="12" height="8" style="left:496px;top:262px" viewBox="0 0 12 8"><path d="M2.5 6l3.5-3.5 3.5 3.5" fill="none" stroke="#555" stroke-width="1.2"/></svg>
<svg width="12" height="8" style="left:496px;top:495px" viewBox="0 0 12 8"><path d="M2.5 2l3.5 3.5 3.5-3.5" fill="none" stroke="#555" stroke-width="1.2"/></svg>
<div class="t" style="left:415px;top:271.5px;font-size:10px;color:#1a1a1a">OneDrive</div>
<div class="t" style="left:415.4px;top:298.0px;font-size:9.8px;color:#1a1a1a">Ruchir</div>
<div class="t" style="left:421.8px;top:318.0px;font-size:10px;color:#1a1a1a">3D Objects</div>
<div class="t" style="left:421.8px;top:338.5px;font-size:10.2px;color:#1a1a1a">Desktop</div>
<div class="t" style="left:421.8px;top:358.5px;font-size:10px;color:#1a1a1a">Documents</div>
<div class="t" style="left:421.8px;top:378.5px;font-size:10.2px;color:#1a1a1a">Downloads</div>
<div class="t" style="left:421.8px;top:398.5px;font-size:10px;color:#1a1a1a">Music</div>
<div class="t" style="left:421.8px;top:418.5px;font-size:10px;color:#1a1a1a">Pictures</div>
<div class="t" style="left:421.8px;top:439.0px;font-size:10px;color:#1a1a1a">Videos</div>
<div class="t" style="left:422px;top:459.0px;font-size:10px;color:#1a1a1a">OS (C:)</div>
<div class="t" style="left:422px;top:479.5px;font-size:10px;color:#1a1a1a">DATA (D:)</div>
<svg width="30" height="250" style="left:394px;top:258px" viewBox="394 258 30 250">
 <!-- onedrive cloud -->
 <path d="M399.5 278.8a2.4 2.4 0 0 1 .3-4.8 3.8 3.8 0 0 1 7-1.2 2.9 2.9 0 0 1 3.6 2.8 1.6 1.6 0 0 1 .2 3.2z" fill="#2b8ad8"/><path d="M402 278.8a2.6 2.6 0 0 1 4-3 2.6 2.6 0 0 1 4.3.6 1.3 1.3 0 0 1 .2 2.4z" fill="#1a6fc0"/>
 <!-- user -->
 <path d="M403 297.5l8.8 2v5.5l-8.8-2z" fill="#4aa4de"/>
 <path d="M403 297.5l8.8 2" stroke="#2a7ec0" stroke-width="0.8"/>
 <path d="M399.5 306.3l5-1.5 5.5 1.2-5 1.5z" fill="#c9ccd0"/>
 <!-- folders -->
 <g>
<path d="M407 316h3.5l1 1.2h2.5v9.8h-7z" fill="#e6c262"/><path d="M408.2 317.8h5.8v9.2h-5.8z" fill="#f7dc8a"/><path d="M410 322.5l3.4-1.6 3.4 1.6v4l-3.4 1.6-3.4-1.6z" fill="#1d9ec4"/><path d="M410 322.5l3.4 1.6 3.4-1.6" fill="none" stroke="#8fe4f0" stroke-width="0.8"/>
<path d="M407 336.3h3.5l1 1.2h2.5v9.2h-7z" fill="#e6c262"/><path d="M408.2 338.1h5.8v8.6h-5.8z" fill="#f7dc8a"/><rect x="410" y="341.7" width="7.4" height="5.2" fill="#2a86d4"/>
<path d="M407 354.7h3.5l1 1.2h2.5v11.8h-7z" fill="#e6c262"/><path d="M408.2 356.5h5.8v11.2h-5.8z" fill="#f7dc8a"/><path d="M411 358.5h4.8l2 2v7h-6.8z" fill="#f6f9fc" stroke="#7a8fa8" stroke-width="0.7"/><rect x="412.8" y="361" width="3" height="4" fill="#5b8fd0"/>
<path d="M407 376.3h3.5l1 1.2h2.5v9.4h-7z" fill="#e6c262"/><path d="M408.2 378.1h5.8v8.8h-5.8z" fill="#f7dc8a"/><path d="M413.5 380.5v3.5M410.3 383.5h6.4l-3.2 4z" stroke="#2d7fcc" stroke-width="1.3" fill="#2d7fcc"/>
<path d="M407 396.6h3.5l1 1.2h2.5v9.6h-7z" fill="#e6c262"/><path d="M408.2 398.4h5.8v9.0h-5.8z" fill="#f7dc8a"/><path d="M414 398.5v7.8" stroke="#1e7fd0" stroke-width="1.4"/><ellipse cx="412.3" cy="406.3" rx="2.2" ry="1.8" fill="#1e7fd0"/><path d="M414 398.5q4 1.5 3.5 5" fill="none" stroke="#1e7fd0" stroke-width="1.3"/>
<path d="M407 417.2h3.5l1 1.2h2.5v8.6h-7z" fill="#e6c262"/><path d="M408.2 419.0h5.8v8.0h-5.8z" fill="#f7dc8a"/><rect x="410.8" y="422.8" width="6.7" height="4.7" fill="#f4f6f8" stroke="#98a4b0" stroke-width="0.6"/><path d="M411.8 426.5l2-1.8 1.5 1 1.2-.8" fill="none" stroke="#4a7ab0" stroke-width="0.7"/>
<path d="M407 437.2h3.5l1 1.2h2.5v9.1h-7z" fill="#e6c262"/><path d="M408.2 439.0h5.8v8.5h-5.8z" fill="#f7dc8a"/><rect x="410.3" y="438.8" width="6.7" height="8.7" fill="#3a3a44"/><rect x="412" y="440" width="3.3" height="2.8" fill="#8a8aa0"/><rect x="412" y="444" width="3.3" height="2.8" fill="#8a8aa0"/>
 </g>
 <!-- drives -->
 <path d="M404.5 457h3v3h-3zM408 457h3v3h-3zM404.5 460.5h3v3h-3zM408 460.5h3v3h-3z" fill="#19a0d8"/>
 <path d="M405 466l2-2h9l2 2v1.5h-13z" fill="#c8c8c8"/>
 <path d="M405 467h13v1.5h-13z" fill="#888"/>
 <path d="M405 486l2-2.5h9l2 2.5v1.5h-13z" fill="#d2d2d2"/>
 <path d="M405 487h13v1.5h-13z" fill="#777"/>
 <path d="M406 506l2-2 2 2z" fill="#3ab0c0"/>
</svg>
<!-- file list -->
<svg width="10" height="6" style="left:625px;top:258.5px" viewBox="0 0 10 6"><path d="M1.5 4.5l3.5-3 3.5 3" fill="none" stroke="#8a8a8a" stroke-width="0.9"/></svg>
<div class="a" style="left:739.5px;top:258px;width:1px;height:22px;background:#e5e5e5"></div>
<div class="a" style="left:839.5px;top:258px;width:1px;height:22px;background:#e5e5e5"></div>
<div class="a" style="left:940px;top:258px;width:1px;height:22px;background:#e5e5e5"></div>
<div class="t" style="left:526.4px;top:264.5px;font-size:9.9px;color:#4c607a">Name</div>
<div class="t" style="left:744.2px;top:264.5px;font-size:10.6px;color:#4c607a">Date modified</div>
<div class="t" style="left:844.8px;top:264.5px;font-size:9.9px;color:#4c607a">Type</div>
<div class="t" style="left:944.7px;top:264.5px;font-size:9.9px;color:#4c607a">Size</div>
<div class="a" style="left:524px;top:285.5px;width:479.5px;height:18px;background:#cce8ff;border:1px solid #99d1ff"></div>
<svg width="12" height="14" style="left:528px;top:287px" viewBox="0 0 12 14">
 <path d="M1.5 1h8.5v11h-8.5z" fill="#7d7d7d"/><path d="M1.5 11.5h8.5v1.5h-8.5z" fill="#d9d9d9"/><path d="M2.5 1.5v10" stroke="#a5a5a5" stroke-width="0.8"/>
</svg>
<div class="t" style="left:544.2px;top:290px;font-size:9.9px;color:#1a1a1a">Particle-Devices.lbr</div>
<div class="t" style="left:744.2px;top:290px;font-size:9.9px;color:#5f5f5f">6/26/2019 10:04 PM</div>
<div class="t" style="left:844.8px;top:290px;font-size:9.45px;color:#5f5f5f">EAGLE library</div>
<div class="t" style="left:969.5px;top:290px;font-size:9.45px;color:#5f5f5f">360 KB</div>
<!-- h scrollbar -->
<div class="a" style="left:512px;top:492px;width:496px;height:14px;background:#f0f0f0"></div>
<div class="a" style="left:525px;top:493px;width:463px;height:12px;background:#cdcdcd"></div>
<svg width="10" height="12" style="left:514px;top:493px" viewBox="0 0 10 12"><path d="M6.5 2.5l-3.5 3.5 3.5 3.5" fill="none" stroke="#555" stroke-width="1.2"/></svg>
<svg width="10" height="12" style="left:996px;top:493px" viewBox="0 0 10 12"><path d="M3.5 2.5l3.5 3.5-3.5 3.5" fill="none" stroke="#555" stroke-width="1.2"/></svg>
<!-- bottom -->
<div class="t" style="left:477.4px;top:522px;font-size:9.6px;color:#1a1a1a">File name:</div>
<div class="a" style="left:526px;top:516.5px;width:302px;height:19px;background:#fff;border:1px solid #8f8f8f;border-top-color:#7a7a7a"></div>
<div class="t" style="left:529px;top:522px;font-size:9.9px;color:#1a1a1a">Particle-Devices.lbr</div>
<svg width="10" height="8" style="left:813px;top:523px" viewBox="0 0 10 8"><path d="M1.5 2l3.5 3.5 3.5-3.5" fill="none" stroke="#555" stroke-width="1"/></svg>
<div class="a" style="left:838px;top:516.5px;width:157.5px;height:19.5px;background:#e5e5e5;border:1px solid #cbcbcb"></div>
<div class="t" style="left:840.9px;top:522px;font-size:10px;color:#1a1a1a">Libraries (*.lbr)</div>
<svg width="10" height="8" style="left:983.5px;top:523px" viewBox="0 0 10 8"><path d="M1.5 2l3.5 3.5 3.5-3.5" fill="none" stroke="#555" stroke-width="1"/></svg>
<div class="a" style="left:838.8px;top:541.5px;width:72px;height:20.3px;background:#e1e1e1;border:1px solid #2f6faa;box-shadow:inset 0 0 0 1px #a8d6f7"></div>
<div class="t" style="left:862.5px;top:547.8px;font-size:10.3px;color:#1a1a1a">Open</div>
<div class="a" style="left:921.7px;top:541.6px;width:73px;height:20.2px;background:#e1e1e1;border:1px solid #bdbdbd"></div>
<div class="t" style="left:943.4px;top:546.8px;font-size:9.8px;color:#1a1a1a">Cancel</div>
<svg width="8" height="8" style="left:999px;top:563px" viewBox="0 0 8 8"><path d="M6 1h1v1h-1zM6 3.5h1v1h-1zM3.5 3.5h1v1h-1zM6 6h1v1h-1zM3.5 6h1v1h-1zM1 6h1v1h-1z" fill="#aaa"/></svg>
<!-- origin mark below dialog -->
<div class="a" style="left:393px;top:573px;width:14px;height:1px;background:#777"></div>
<div class="a" style="left:399.3px;top:574px;width:1.2px;height:6.5px;background:#888"></div>
</body></html>
